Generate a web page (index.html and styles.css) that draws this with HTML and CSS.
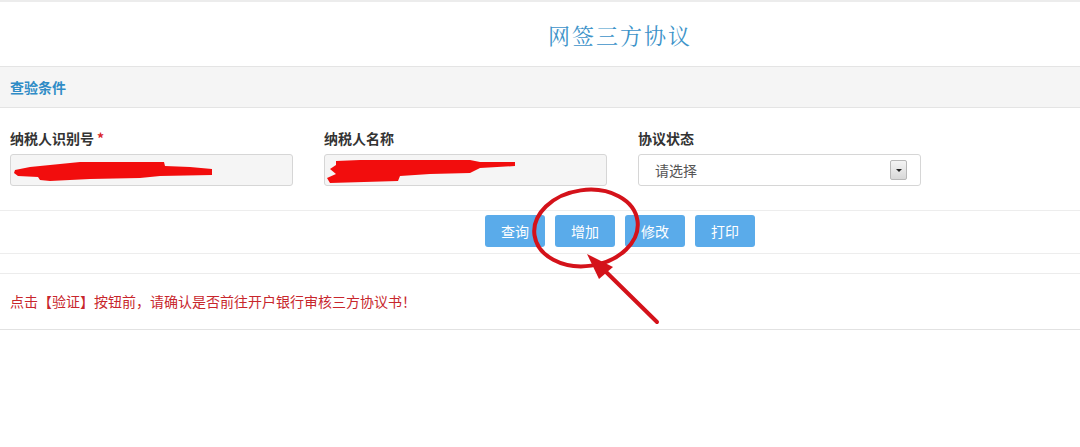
FILE: index.html
```html
<!DOCTYPE html>
<html>
  <head>
    <meta charset="utf-8">
    <title>网签三方协议</title>
    <link rel="stylesheet" href="styles.css">
  </head>
  <body>
    <div class="page">
      <div class="header">
        <h1 class="title">网签三方协议</h1>
      </div>

      <div class="panel-head">查验条件</div>

      <div class="form-row">
        <div class="field">
          <label>纳税人识别号<span class="req">*</span></label>
          <div class="input readonly"></div>
        </div>
        <div class="field">
          <label>纳税人名称</label>
          <div class="input readonly"></div>
        </div>
        <div class="field">
          <label>协议状态</label>
          <div class="input select">
            <span>请选择</span>
            <span class="drop"><i></i></span>
          </div>
        </div>
      </div>

      <div class="btn-row">
        <button class="btn">查询</button>
        <button class="btn">增加</button>
        <button class="btn">修改</button>
        <button class="btn">打印</button>
      </div>

      <div class="notice">点击【验证】按钮前，请确认是否前往开户银行审核三方协议书！</div>
    </div>

    <!-- red marks drawn over the screenshot: redactions and the circle/arrow -->
    <svg class="marks" width="1080" height="447" viewBox="0 0 1080 447">
      <path d="M15 170 L30 167 L60 164 L80 162 L164 162 L165 166 L190 167 L212 169 L212 175 L160 176 L140 178 L90 179 L50 181 L40 180 L38 177 L18 176 L14 173 Z" fill="#f20d0d"/>
      <path d="M336 161 L360 160 L420 160 L470 160 L480 162 L515 162 L515 166 L480 168 L470 173 L430 174 L400 176 L398 181 L330 183 L327 178 L336 174 L330 169 L336 165 Z" fill="#f20d0d"/>
      <ellipse cx="586" cy="228" rx="52" ry="38" transform="rotate(-8 586 228)" fill="none" stroke="#d4121a" stroke-width="4"/>
      <line x1="657" y1="322" x2="600" y2="266" stroke="#d4121a" stroke-width="4" stroke-linecap="round"/>
      <polygon points="587,254 613,267 599,279" fill="#d4121a"/>
    </svg>
  </body>
</html>
```
FILE: styles.css
```css
body        {margin:0; background:#fff;
             font-family:"Noto Sans CJK SC","Liberation Sans",sans-serif; font-size:14px; color:#333;}
.page       {width:1080px; border-top:2px solid #ececec;}

.header     {height:64px; display:flex; align-items:center; justify-content:center; padding-left:160px;}
.title      {margin:0; font-size:22px; font-weight:400; letter-spacing:2px; color:#3d93c9;
             font-family:"Noto Serif CJK SC","Noto Sans CJK SC",serif;}

.panel-head {height:40px; line-height:40px; padding-left:10px; background:#f5f5f5;
             border-top:1px solid #e4e4e4; border-bottom:1px solid #e4e4e4;
             color:#2f8cc6; font-weight:700; font-size:14px;}

.form-row   {display:grid; grid-template-columns:283px 283px 283px; column-gap:31px;
             padding:20px 0 24px 10px; border-bottom:1px solid #ededed;}
.field      {display:flex; flex-direction:column; gap:6px;}
.field label{font-weight:700; font-size:14px; line-height:20px; color:#333;}
.req        {color:#d9262c; margin-left:3px;}
.input      {height:30px; border:1px solid #d6d6d6; border-radius:3px; box-sizing:content-box;}
.readonly   {background:#f5f5f5; width:281px;}
.select     {background:#fff; display:flex; align-items:center; justify-content:space-between;
             padding:0 13px 0 16px; width:252px; color:#555;}
.drop       {width:15px; height:18px; border:1px solid #b8b8b8; border-radius:2px;
             background:linear-gradient(#f4f4f4,#d8d8d8); display:flex; align-items:center; justify-content:center;}
.drop i     {width:0; height:0; border-left:3px solid transparent; border-right:3px solid transparent;
             border-top:3px solid #222;}

.btn-row    {display:flex; justify-content:center; gap:10px; padding:4px 0 6px 160px;
             border-bottom:1px solid #ededed; margin-bottom:19px;}
.btn        {width:60px; height:32px; border:0; border-radius:3px; background:#5aabea; color:#fff;
             font-family:inherit; font-size:14px; padding:0;}

.notice     {height:55px; line-height:55px; padding-left:10px; color:#c8262c; font-size:14px;
             border-top:1px solid #ececec; border-bottom:1px solid #e2e2e2;}

.marks      {position:absolute; left:0; top:0; pointer-events:none;}
```
